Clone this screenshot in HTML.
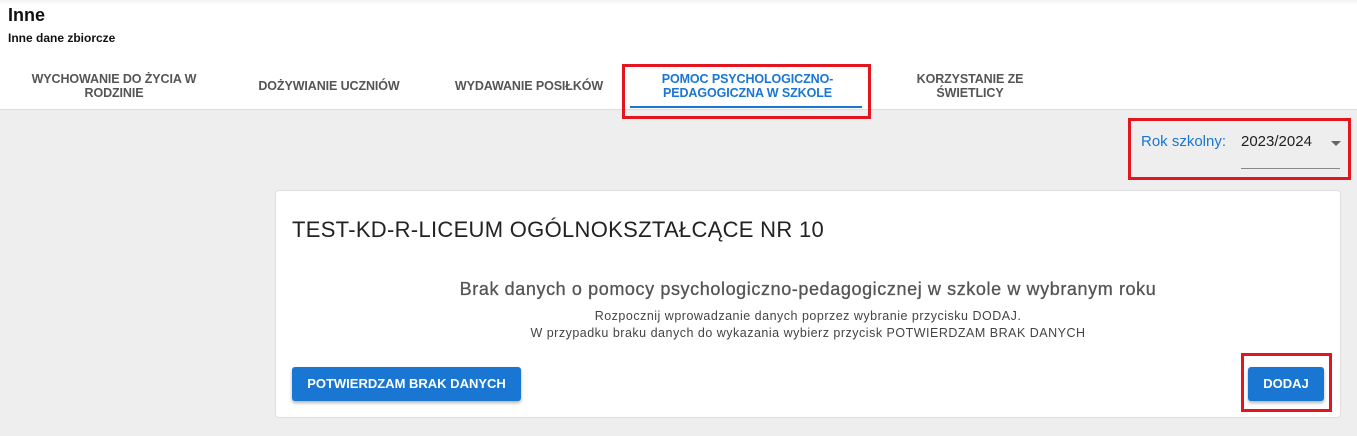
<!DOCTYPE html>
<html><head><meta charset="utf-8"><style>
*{box-sizing:border-box;margin:0;padding:0}
body{width:1357px;height:436px;overflow:hidden;background:#eeeeee;font-family:"Liberation Sans",sans-serif;position:relative}
.hdr{position:absolute;left:0;top:0;width:1357px;height:110px;background:#fff;border-bottom:1px solid #ddd}
.hdr:before{content:"";position:absolute;left:0;top:0;right:0;height:5px;background:linear-gradient(#f3f3f3,#fff)}
.t1{position:absolute;left:8px;top:5px;font-size:18px;font-weight:bold;color:#111}
.t2{position:absolute;left:8px;top:31px;font-size:12px;font-weight:bold;color:#111}
.tab{position:absolute;top:72px;font-size:12.5px;font-weight:bold;color:#555;text-align:center;line-height:14px;letter-spacing:-0.1px}
.red{position:absolute;border:3px solid #e3161f}
.card{position:absolute;left:275px;top:190px;width:1066px;height:228px;background:#fff;border:1px solid #e0e0e0;border-radius:4px}
.btn{position:absolute;background:#1976d2;color:#fff;font-size:13px;font-weight:bold;text-align:center;border-radius:3px;box-shadow:0 2px 3px rgba(0,0,0,.3);line-height:34px}
</style></head><body>
<div class="hdr">
<div class="t1">Inne</div>
<div class="t2">Inne dane zbiorcze</div>
<div class="tab" style="left:14px;width:200px">WYCHOWANIE DO ŻYCIA W<br>RODZINIE</div>
<div class="tab" style="left:240px;width:178px;top:79px">DOŻYWIANIE UCZNIÓW</div>
<div class="tab" style="left:440px;width:178px;top:79px">WYDAWANIE POSIŁKÓW</div>
<div class="tab" style="left:630px;width:235px;color:#1976d2">POMOC PSYCHOLOGICZNO-<br>PEDAGOGICZNA W SZKOLE</div>
<div style="position:absolute;left:630px;top:106px;width:232px;height:2px;background:#1976d2"></div>
<div class="tab" style="left:870px;width:200px">KORZYSTANIE ZE<br>ŚWIETLICY</div>
</div>
<div class="red" style="left:622px;top:64px;width:249px;height:55px"></div>
<div class="red" style="left:1128px;top:118px;width:223px;height:62px"></div>
<div style="position:absolute;left:1141px;top:133px;font-size:15px;color:#1976d2">Rok szkolny:</div>
<div style="position:absolute;left:1241px;top:133px;font-size:15px;color:#222">2023/2024</div>
<div style="position:absolute;left:1331px;top:141px;border-left:5px solid transparent;border-right:5px solid transparent;border-top:5px solid #666"></div>
<div style="position:absolute;left:1241px;top:168px;width:99px;height:1px;background:#888"></div>
<div class="card">
<div style="position:absolute;left:16px;top:26px;font-size:22px;color:#222;letter-spacing:0.3px">TEST-KD-R-LICEUM OGÓLNOKSZTAŁCĄCE NR 10</div>
<div style="position:absolute;left:0;width:100%;top:88px;text-align:center;font-size:18px;color:#555;letter-spacing:0.6px;font-weight:500;-webkit-text-stroke:0.3px #555">Brak danych o pomocy psychologiczno-pedagogicznej w szkole w wybranym roku</div>
<div style="position:absolute;left:0;width:100%;top:117px;text-align:center;font-size:12.5px;color:#444;line-height:17px;letter-spacing:0.5px">Rozpocznij wprowadzanie danych poprzez wybranie przycisku DODAJ.<br>W przypadku braku danych do wykazania wybierz przycisk POTWIERDZAM BRAK DANYCH</div>
<div class="btn" style="left:16px;top:176px;width:229px">POTWIERDZAM BRAK DANYCH</div>
<div class="btn" style="left:972px;top:176px;width:76px">DODAJ</div>
</div>
<div class="red" style="left:1241px;top:353px;width:91px;height:59px"></div>
</body></html>
